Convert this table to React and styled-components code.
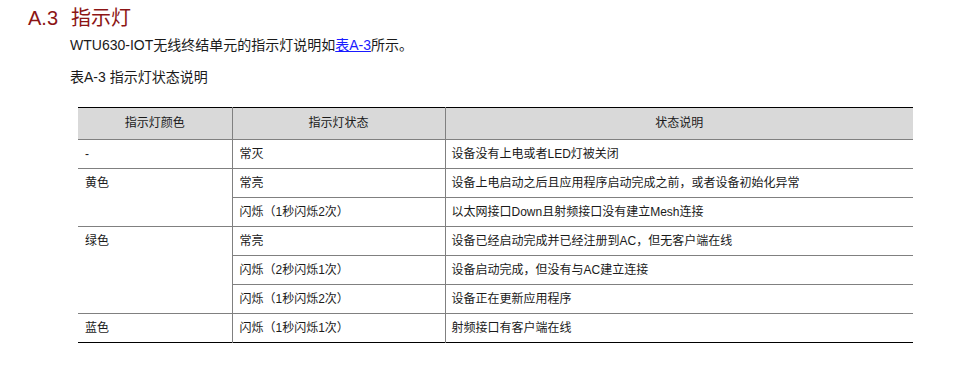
import styled, { createGlobalStyle } from 'styled-components';

const rows = [
  { color: '-', span: 1, items: [['常灭', '设备没有上电或者LED灯被关闭']] },
  {
    color: '黄色',
    span: 2,
    items: [
      ['常亮', '设备上电启动之后且应用程序启动完成之前，或者设备初始化异常'],
      ['闪烁（1秒闪烁2次）', '以太网接口Down且射频接口没有建立Mesh连接'],
    ],
  },
  {
    color: '绿色',
    span: 3,
    items: [
      ['常亮', '设备已经启动完成并已经注册到AC，但无客户端在线'],
      ['闪烁（2秒闪烁1次）', '设备启动完成，但没有与AC建立连接'],
      ['闪烁（1秒闪烁2次）', '设备正在更新应用程序'],
    ],
  },
  { color: '蓝色', span: 1, items: [['闪烁（1秒闪烁1次）', '射频接口有客户端在线']] },
];

export default function App() {
  return (
    <>
      <GlobalStyle />
      <Page>
        <Heading>
          <span>A.3</span>
          <span>指示灯</span>
        </Heading>
        <Section>
          <Intro>
            WTU630-IOT无线终结单元的指示灯说明如<a href="#tab-a3">表A-3</a>所示。
          </Intro>
          <Caption id="tab-a3">表A-3 指示灯状态说明</Caption>
          <Table>
            <colgroup>
              <col style={{ width: 154 }} />
              <col style={{ width: 213 }} />
              <col />
            </colgroup>
            <thead>
              <tr>
                <Th>指示灯颜色</Th>
                <Th>指示灯状态</Th>
                <Th>状态说明</Th>
              </tr>
            </thead>
            <tbody>
              {rows.map((group) =>
                group.items.map(([state, desc], i) => (
                  <tr key={group.color + i}>
                    {i === 0 && <Td rowSpan={group.span}>{group.color}</Td>}
                    <Td>{state}</Td>
                    <Td $pad={6}>{desc}</Td>
                  </tr>
                ))
              )}
            </tbody>
          </Table>
        </Section>
      </Page>
    </>
  );
}

const GlobalStyle = createGlobalStyle`
  body {
    margin: 0;
    background: #ffffff;
    font-family: 'Liberation Sans', 'Noto Sans CJK SC', sans-serif;
    color: #1a1a1a;
  }
`;

const Page = styled.div`
  padding: 6px 0 0 28px;
`;

const Heading = styled.h2`
  margin: 0;
  display: flex;
  gap: 13px;
  font-size: 20px;
  line-height: 24px;
  font-weight: 400;
  color: #8c1515;
`;

const Section = styled.div`
  padding-left: 42px;
`;

const Intro = styled.p`
  margin: 5px 0 0;
  font-size: 14px;
  line-height: 20px;

  a {
    color: #1a1aff;
    text-decoration: underline;
  }
`;

const Caption = styled.p`
  margin: 12px 0 0;
  font-size: 14px;
  line-height: 20px;
`;

const Table = styled.table`
  margin: 20px 0 0 8px;
  width: 835px;
  border-collapse: collapse;
  table-layout: fixed;
  font-size: 12px;
  line-height: 16px;
  border-top: 1px solid #000000;
  border-bottom: 1px solid #000000;
`;

const Th = styled.th`
  background: #d9d9d9;
  font-weight: 400;
  text-align: center;
  padding: 7px 6px 8px;
  border-left: 1px solid #808080;
  border-bottom: 1px solid #808080;

  &:first-child {
    border-left: none;
  }
`;

const Td = styled.td`
  vertical-align: top;
  text-align: left;
  padding: 6px ${(props) => props.$pad || 7}px;
  border-left: 1px solid #808080;
  border-top: 1px solid #808080;

  tr:first-child > & {
    border-top: none;
  }
  &:first-child[rowspan] {
    border-left: none;
  }
`;
